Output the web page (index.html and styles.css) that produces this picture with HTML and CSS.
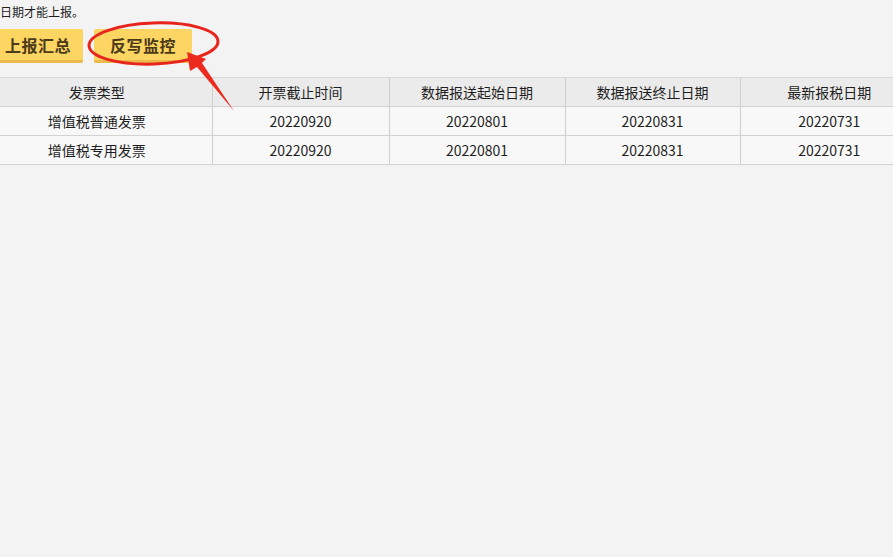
FILE: index.html
```html
<!DOCTYPE html>
<html lang="zh-CN">
<head>
<meta charset="utf-8">
<link rel="stylesheet" href="styles.css">
</head>
<body>
<div class="page">
  <p class="notice">日期才能上报。</p>
  <div class="toolbar">
    <button class="btn btn-first">上报汇总</button>
    <button class="btn btn-second">反写监控</button>
  </div>
  <table class="grid">
    <colgroup>
      <col class="c1"><col class="c2"><col class="c3"><col class="c4"><col class="c5">
    </colgroup>
    <thead>
      <tr><th>发票类型</th><th>开票截止时间</th><th>数据报送起始日期</th><th>数据报送终止日期</th><th>最新报税日期</th></tr>
    </thead>
    <tbody>
      <tr><td>增值税普通发票</td><td>20220920</td><td>20220801</td><td>20220831</td><td>20220731</td></tr>
      <tr><td>增值税专用发票</td><td>20220920</td><td>20220801</td><td>20220831</td><td>20220731</td></tr>
    </tbody>
  </table>
</div>
<svg class="annot" width="893" height="557" viewBox="0 0 893 557">
  <ellipse cx="153.5" cy="43.5" rx="64.5" ry="20.5" fill="none" stroke="#e8251c" stroke-width="3" transform="rotate(-2 153.5 43.5)"/>
  <polygon points="187,52 206,59 202,63 234,111 197,67 190,71" fill="#ec2a1e"/>
</svg>
</body>
</html>
```
FILE: styles.css
```css
html, body {
  margin: 0;
  padding: 0;
  background: #f3f3f3;
  overflow: hidden;
  width: 893px;
  height: 557px;
}
body {
  position: relative;
  font-family: "Noto Sans CJK SC", "Microsoft YaHei", sans-serif;
  color: #222;
}
.page {
  margin-left: -18px;
  width: 940px;
}
.notice {
  margin: 0;
  padding: 3px 0 0 18px;
  height: 28px;
  box-sizing: border-box;
  font-size: 12px;
  line-height: 18px;
  color: #1e1e1e;
}
.toolbar {
  display: flex;
  gap: 11px;
  padding-left: 10px;
  padding-top: 1px;
  height: 49px;
  box-sizing: border-box;
}
.btn {
  font-family: "Noto Sans CJK SC", sans-serif;
  font-weight: bold;
  font-size: 16px;
  color: #4a3a18;
  background: #fdd563;
  border: none;
  border-bottom: 3px solid #ebb94c;
  border-radius: 2px;
  height: 34px;
  padding: 0 12px 0 13px;
  letter-spacing: 0.5px;
}
.btn-second {
  padding: 0 16px;
}
.grid {
  border-collapse: collapse;
  table-layout: fixed;
  width: 936px;
  font-size: 14px;
}
.c1 { width: 230px; }
.c2 { width: 177px; }
.c3 { width: 176px; }
.c4 { width: 175px; }
.c5 { width: 178px; }
.grid th {
  background: #ebebeb;
  font-weight: normal;
  height: 28px;
  padding: 0;
  border-top: 1px solid #d6d6d6;
  border-bottom: 1px solid #d2d2d2;
  border-left: 1px solid #cfcfcf;
  color: #1e1e1e;
}
.grid td {
  background: #f8f8f8;
  height: 28px;
  padding: 0;
  text-align: center;
  border-bottom: 1px solid #d2d2d2;
  border-left: 1px solid #cfcfcf;
  color: #1e1e1e;
}
.grid th:first-child, .grid td:first-child {
  border-left: none;
}
.annot {
  position: absolute;
  left: 0;
  top: 0;
  pointer-events: none;
}
```
